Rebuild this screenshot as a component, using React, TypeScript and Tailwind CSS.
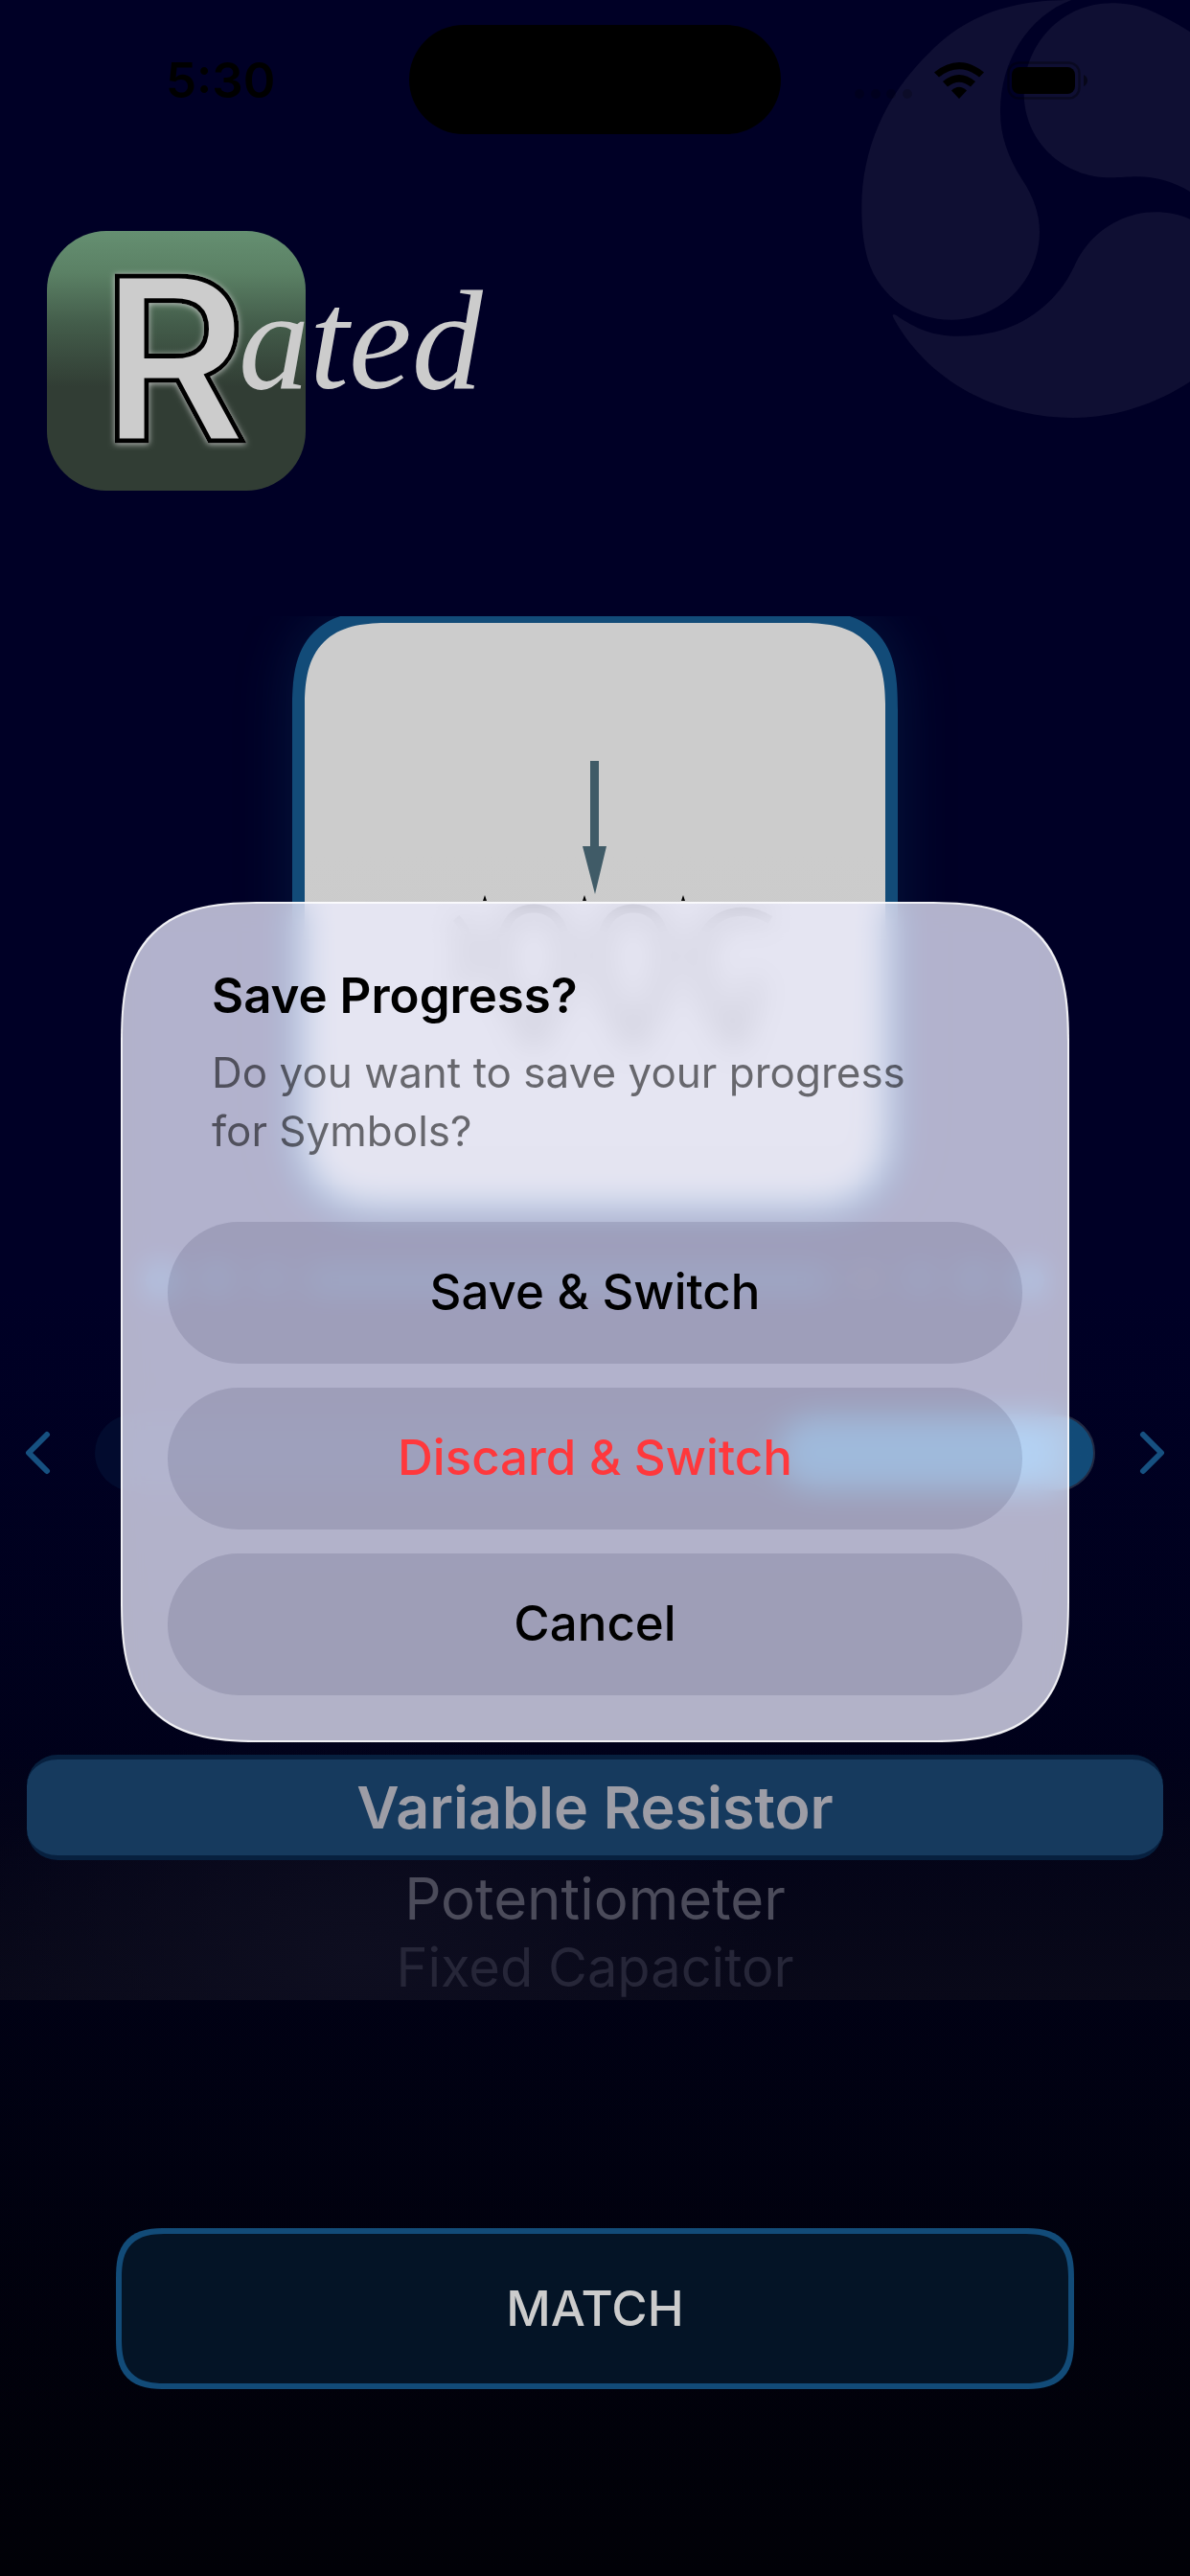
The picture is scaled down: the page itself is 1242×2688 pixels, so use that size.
import React, { FC } from 'react'

interface PickerOption {
  label: string
  className: string
}

const options: PickerOption[] = [
  { label: 'Potentiometer', className: 'text-[60px] leading-[80px] text-[#4b4b5a]' },
  { label: 'Fixed Capacitor', className: 'text-[56px] leading-[64px] text-[#262638]' },
]

const Triskelion: FC = () => (
  <svg
    className="absolute right-0 top-0 h-[450px] w-[382px] text-[#0f0f33]"
    viewBox="0 0 1146 1350"
    fill="currentColor"
    aria-hidden="true"
  >
    <path d="M775 0C640 0 470 20 330 165C190 300 118 470 118 650C118 720 125 770 138 815C175 930 280 1001 400 1001C550 1001 675 880 675 725C675 670 655 615 622 565C575 490 552 425 552 350C552 190 640 50 775 0Z" />
    <path d="M1146 100C1090 65 1050 45 1010 28C970 14 935 10 900 10C740 10 626 145 626 290C626 440 745 556 900 556C930 556 950 553 980 553C1040 553 1095 570 1146 600Z" />
    <path d="M1146 686C1110 670 1075 664 1038 664C940 664 845 720 795 810C775 850 765 875 740 905C665 1000 560 1052 420 1052C340 1052 290 1030 225 986C215 983 212 986 218 996C330 1200 550 1308 780 1308C910 1308 1040 1265 1146 1195Z" />
  </svg>
)

const StatusBar: FC = () => (
  <div className="relative flex h-[166px] items-start justify-between pl-[173px] pr-[106px]">
    <span className="mt-[52px] text-[51px] font-semibold leading-[64px] text-black">5:30</span>
    <div className="absolute left-1/2 top-[26px] h-[114px] w-[388px] -translate-x-1/2 rounded-full bg-black" />
    <svg className="mt-[60px] h-12 w-[246px]" viewBox="0 0 246 48" aria-hidden="true">
      <g fillOpacity="0.2">
        <circle cx="7" cy="38" r="5" />
        <circle cx="24" cy="38" r="5" />
        <circle cx="40" cy="38" r="5" />
        <circle cx="57" cy="38" r="5" />
      </g>
      <path d="M85 15.500Q111 -5.500 137 15.500L132 20.500Q111 4 90 20.500Z" />
      <path d="M94 25Q111 11 128 25L123 30.500Q111 21 99 30.500Z" />
      <path d="M103 34.500Q111 27 119 34.500L111 43Z" />
      <rect x="162.500" y="5.500" width="74" height="37" rx="11" fill="none" stroke="black" strokeOpacity="0.35" strokeWidth="2.500" />
      <rect x="166" y="10" width="66" height="28" rx="8" />
      <path d="M241 18Q245 20 245 24Q245 28 241 30Z" fillOpacity="0.5" />
    </svg>
  </div>
)

const Logo: FC = () => (
  <svg className="ml-[49px] mt-[75px] h-[271px] w-[490px] overflow-visible" viewBox="0 0 490 271" role="img" aria-label="Rated">
    <defs>
      <linearGradient id="tile" x1="0" y1="0" x2="0" y2="1">
        <stop offset="0" stopColor="#658f71" />
        <stop offset="0.16" stopColor="#5b8165" />
        <stop offset="0.36" stopColor="#435c4a" />
        <stop offset="0.6" stopColor="#313d34" />
        <stop offset="1" stopColor="#313d34" />
      </linearGradient>
      <filter id="glow" x="-20%" y="-20%" width="140%" height="140%">
        <feDropShadow dx="0" dy="1" stdDeviation="3" floodColor="#dddddd" floodOpacity="0.8" />
      </filter>
    </defs>
    <rect width="270" height="271" rx="62" fill="url(#tile)" />
    <text
      x="56"
      y="219"
      fontFamily="Inter"
      fontWeight="600"
      fontSize="236"
      fill="#cccccc"
      stroke="black"
      strokeWidth="5"
      filter="url(#glow)"
    >
      R
    </text>
    <text x="200" y="164" fontFamily="Liberation Serif" fontStyle="italic" fontSize="148" fill="#cccccc">
      ated
    </text>
  </svg>
)

const SymbolCard: FC = () => (
  <div className="mt-[131px] flex h-[640px] justify-center overflow-hidden">
    <div className="-mt-[6px] h-[632px] w-[632px] rounded-[104px] border-[13px] border-[#124b78] bg-gradient-to-b from-[#cccccc] from-40% to-[#c8c8c8] shadow-[0_0_60px_rgba(18,75,120,0.3)] [corner-shape:superellipse(1.5)]">
      <svg className="h-full w-full" viewBox="0 0 606 606" aria-hidden="true">
        <path d="M298 144h9v89h8L303 283L290 233h8Z" fill="#405b67" />
        <path d="M186 290l2 -6l2 6ZM290 290l2 -6l2 6ZM393 290l2 -6l2 6Z" />
        <g fill="none" stroke="#444444" strokeWidth="9">
          <path d="M158 308Q174 325 174 345Q172 365 162 378" />
          <path d="M239 298C205 298 200 340 206 365C212 395 232 420 239 435C246 420 266 395 272 365C278 340 273 298 239 298Z" />
          <path d="M343 298C309 298 304 340 310 365C316 395 336 420 343 435C350 420 370 395 376 365C382 340 377 298 343 298Z" />
          <path d="M486 310C450 288 412 310 411 345C412 385 440 420 449 435C456 415 466 395 470 372" />
        </g>
      </svg>
    </div>
  </div>
)

// faded dots on both ends of the level indicator
const LevelDots: FC = () => (
  <div className="mt-[37px] flex h-8 items-center justify-between px-[152px]">
    <div className="flex gap-7">
      <div className="size-8 rounded-full bg-[#1c6296]" />
      <div className="size-7 rounded-full bg-[#1c6296]/70" />
      <div className="size-7 rounded-full bg-[#1c6296]/50" />
    </div>
    <div className="mx-6 h-6 flex-1 bg-[#1c6296]/50" />
    <div className="flex gap-7">
      <div className="size-7 rounded-full bg-[#48485a]/50" />
      <div className="size-7 rounded-full bg-[#1c6296]/50" />
      <div className="size-7 rounded-full bg-[#1c6296]/70" />
      <div className="size-8 rounded-full bg-[#1c6296]" />
    </div>
  </div>
)

const Chevron: FC<{ flip?: boolean }> = ({ flip }) => (
  <svg
    className={flip ? 'h-12 w-7 rotate-180' : 'h-12 w-7'}
    viewBox="0 0 28 48"
    fill="none"
    stroke="#165080"
    strokeWidth="6"
    strokeLinecap="round"
    strokeLinejoin="round"
    aria-hidden="true"
  >
    <path d="M24 5L5 24L24 43" />
  </svg>
)

const ModeSwitcher: FC = () => (
  <div className="mt-[124px] flex items-center justify-between px-[25px]">
    <button type="button" aria-label="Previous">
      <Chevron />
    </button>
    <div className="mx-[46px] flex h-[80px] flex-1 justify-end rounded-full bg-[#020b2e]">
      <div className="w-[332px] rounded-full border-2 border-[#232b44] bg-gradient-to-r from-[#2878ad] from-84% to-[#124b78] to-92%" />
    </div>
    <button type="button" aria-label="Next">
      <Chevron flip />
    </button>
  </div>
)

const Picker: FC = () => (
  <div className="bg-[radial-gradient(ellipse_at_30%_92%,#0e0e20,transparent_35%),linear-gradient(to_bottom,transparent_50%,#090919)] px-7 pb-[2px] pt-[275px] text-center">
    <div className="rounded-[32px] border-y-[5px] border-[#07203f] bg-[#163a5e] text-[61px] font-semibold leading-[100px] text-[#9d9da6]">
      Variable Resistor
    </div>
    {options.map((option) => (
      <div key={option.label} className={option.className}>
        {option.label}
      </div>
    ))}
  </div>
)

const SaveDialog: FC = () => (
  <div className="absolute inset-0 flex items-center justify-center px-[126px] pt-[70px]">
    <div
      role="alertdialog"
      aria-labelledby="save-title"
      aria-describedby="save-message"
      className="w-full rounded-[150px] border-2 border-white/80 bg-[#ededff]/75 px-[47px] pb-[47px] pt-[66px] backdrop-blur-[16px] backdrop-saturate-150 [corner-shape:superellipse(1.5)]"
    >
      <h2 id="save-title" className="px-[46px] text-[51px] font-semibold leading-[60px] text-black">
        Save Progress?
      </h2>
      <p id="save-message" className="mt-[20px] pl-[46px] pr-[110px] text-[44px] leading-[61px] text-black/55">
        Do you want to save your progress for Symbols?
      </p>
      <div className="mt-[64px] flex flex-col gap-[25px] text-[51px] font-medium text-black">
        <button type="button" className="h-[148px] rounded-full bg-[#14143c]/13">
          Save &amp; Switch
        </button>
        <button type="button" className="h-[148px] rounded-full bg-[#14143c]/13 text-[#ff383c]">
          Discard &amp; Switch
        </button>
        <button type="button" className="h-[148px] rounded-full bg-[#14143c]/13">
          Cancel
        </button>
      </div>
    </div>
  </div>
)

const App: FC = () => (
  <main className="relative min-h-screen overflow-hidden bg-gradient-to-b from-[#000026] from-50% to-[#010107] font-[Inter,sans-serif]">
    <Triskelion />
    <StatusBar />
    <Logo />
    <SymbolCard />
    <LevelDots />
    <ModeSwitcher />
    <Picker />
    <div className="mt-[238px] px-[121px] pb-[195px]">
      <button
        type="button"
        className="block h-[168px] w-full rounded-[54px] border-[6px] border-[#124b78] bg-[#041426] text-[51px] font-medium text-[#cccccc] [corner-shape:superellipse(1.5)]"
      >
        MATCH
      </button>
    </div>
    <SaveDialog />
  </main>
)

export default App
